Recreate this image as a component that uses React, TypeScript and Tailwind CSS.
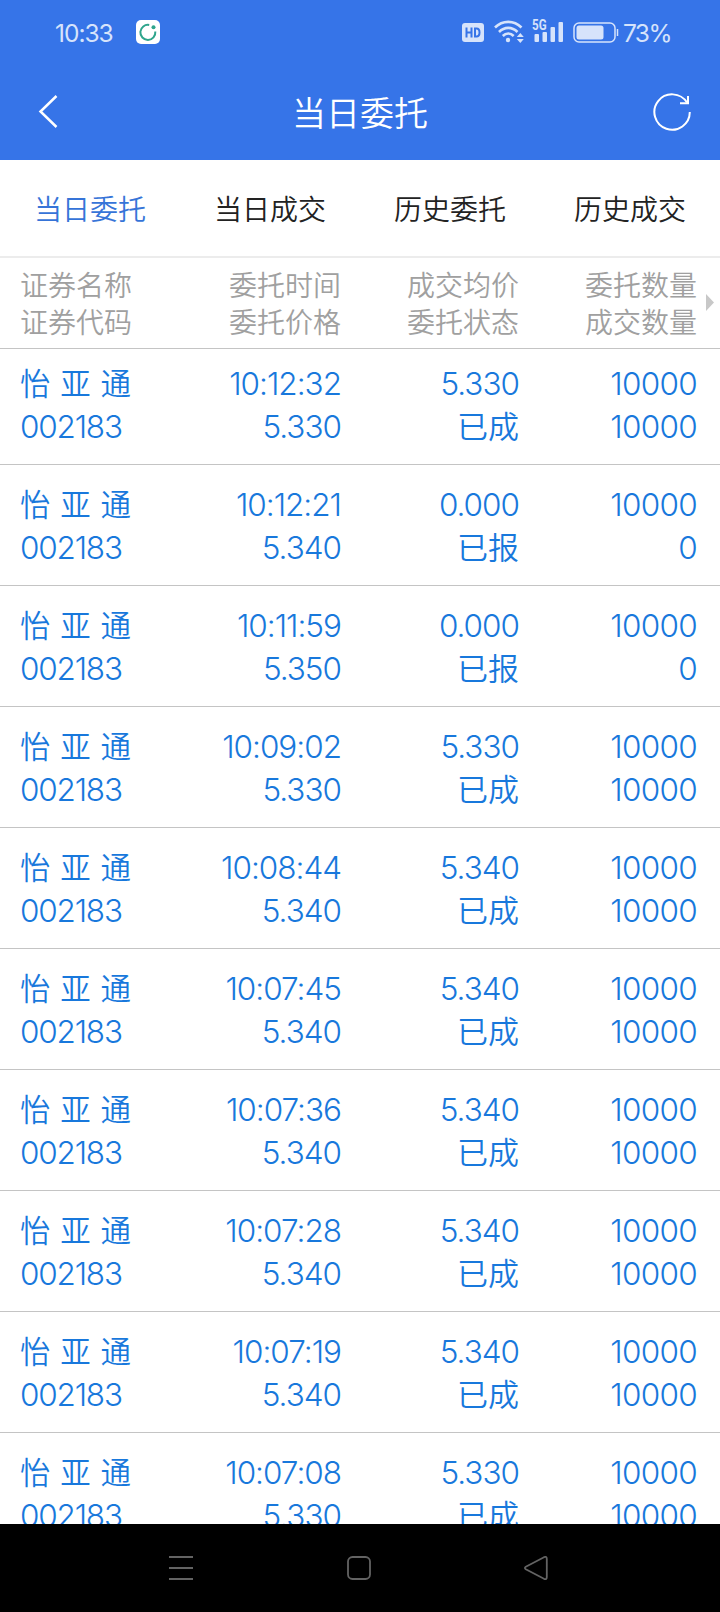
import { clsx } from "clsx";

const tabs = ["当日委托", "当日成交", "历史委托", "历史成交"];

const columns = [
  ["证券名称", "证券代码"],
  ["委托时间", "委托价格"],
  ["成交均价", "委托状态"],
  ["委托数量", "成交数量"],
];

const orders = [
  { time: "10:12:32", price: "5.330", average: "5.330", status: "已成", filled: "10000" },
  { time: "10:12:21", price: "5.340", average: "0.000", status: "已报", filled: "0" },
  { time: "10:11:59", price: "5.350", average: "0.000", status: "已报", filled: "0" },
  { time: "10:09:02", price: "5.330", average: "5.330", status: "已成", filled: "10000" },
  { time: "10:08:44", price: "5.340", average: "5.340", status: "已成", filled: "10000" },
  { time: "10:07:45", price: "5.340", average: "5.340", status: "已成", filled: "10000" },
  { time: "10:07:36", price: "5.340", average: "5.340", status: "已成", filled: "10000" },
  { time: "10:07:28", price: "5.340", average: "5.340", status: "已成", filled: "10000" },
  { time: "10:07:19", price: "5.340", average: "5.340", status: "已成", filled: "10000" },
  { time: "10:07:08", price: "5.330", average: "5.330", status: "已成", filled: "10000" },
];

function StatusBar() {
  return (
    <div className="flex h-16 items-center pl-[55px] pr-[51px] font-['Inter','Noto_Sans_CJK_SC',sans-serif] text-[24.5px] font-normal leading-none text-[#d6e3fb]">
      <span className="w-[81px] pt-0.5 tracking-[-1px]">10:33</span>
      <svg className="h-6 w-6" viewBox="0 0 24 24" fill="none">
        <rect width="24" height="24" rx="5" fill="#fff" />
        <path d="M13.2 5A7.5 7.5 0 1 0 19.3 11.5" stroke="#2fa58c" strokeWidth="2" />
        <circle cx="17.5" cy="7.2" r="2" fill="#2fa58c" />
      </svg>
      <div className="ml-auto flex items-center">
        <svg className="h-6 w-[22px]" viewBox="0 0 22 24" fill="none">
          <rect y="3" width="22" height="19" rx="3" fill="#d6e3fb" />
          <path d="M4.5 7.5v10M9.5 7.5v10M4.5 12.5h5M13 8.5v8h1.5q3 0 3-4t-3-4z" stroke="#3674e8" strokeWidth="2" />
        </svg>
        <svg className="ml-2.5 h-6 w-[30px]" viewBox="0 0 30 24" fill="none" stroke="#d6e3fb" strokeWidth="2.6">
          <path d="M1 7.5C8.500 0 20 0 27.500 7.500M5 12C10.500 6.500 18 6.500 23.500 12M8.800 16C12 12.800 16.500 12.800 19.700 16" />
          <circle cx="14" cy="20" r="2.200" fill="#d6e3fb" stroke="none" />
          <path d="M26.300 13l3.500 4h-7zM26.300 23l3.500-4h-7z" fill="#d6e3fb" stroke="none" />
        </svg>
        <div className="relative ml-2 h-6 w-8">
          <span className="absolute left-0 -top-px origin-left scale-x-80 font-[Roboto,sans-serif] text-[14.5px] font-bold leading-none">
            5G
          </span>
          <svg className="h-6 w-8" viewBox="0 0 32 24" fill="#d6e3fb">
            <rect x="2.500" y="14" width="4.500" height="8" rx="1" />
            <rect x="10.500" y="12" width="4.500" height="10" rx="1" />
            <rect x="18.500" y="7" width="4.500" height="15" rx="1" />
            <rect x="26.500" y="2" width="4.500" height="20" rx="1" />
          </svg>
        </div>
        <svg className="ml-[9px] h-6 w-[46px]" viewBox="0 0 46 24" fill="none">
          <rect x="1" y="3" width="41" height="19" rx="5" stroke="#d6e3fb" strokeWidth="1.500" />
          <rect x="3.500" y="5.500" width="27" height="14" rx="2.500" fill="#d6e3fb" />
          <path d="M44.500 9v7" stroke="#d6e3fb" strokeWidth="1.500" />
        </svg>
        <span className="ml-1 w-[46px] whitespace-nowrap pt-0.5 tracking-[-1.6px]">73%</span>
      </div>
    </div>
  );
}

function TitleBar() {
  return (
    <div className="flex h-24 items-center justify-between pl-[38px] pr-[29px]">
      <svg className="h-9 w-5" viewBox="0 0 20 36" fill="none" stroke="#fff" strokeWidth="2.500">
        <path d="M18.500 2L2.500 17.500L18.500 33" />
      </svg>
      <h1 className="pl-[9px] text-[34px] leading-none text-white">当日委托</h1>
      <svg className="h-[38px] w-[38px]" viewBox="0 0 38 38" fill="none" stroke="#fff" strokeWidth="2">
        <path d="M36.800 19A17.700 17.700 0 1 1 34 9.500" />
        <path d="M35 3v7.300H27" />
      </svg>
    </div>
  );
}

function NavBar() {
  return (
    <nav className="flex h-[88px] items-center bg-black pl-[169px]">
      <svg className="h-6 w-6" viewBox="0 0 24 24" stroke="#636363" strokeWidth="2">
        <path d="M0 1h24M0 12h24M0 23h24" />
      </svg>
      <svg className="ml-[154px] h-6 w-6" viewBox="0 0 24 24" fill="none" stroke="#636363" strokeWidth="1.800">
        <rect x="1" y="1" width="22" height="22" rx="4.500" />
      </svg>
      <svg className="ml-[153px] h-6 w-6" viewBox="0 0 24 24" fill="none" stroke="#636363" strokeWidth="1.800">
        <path d="M1.800 10.700L20 1.200Q22.800 0 22.800 3V21Q22.800 24 20 22.800L1.800 13.300Q0 12 1.800 10.700Z" />
      </svg>
    </nav>
  );
}

export default function App() {
  return (
    <div className="flex h-[1612px] w-[720px] flex-col overflow-hidden bg-white font-['Noto_Sans_CJK_SC',sans-serif] font-[350]">
      <header className="h-40 shrink-0 bg-[#3674e8]">
        <StatusBar />
        <TitleBar />
      </header>

      {/* Tabs */}
      <div className="grid h-[98px] shrink-0 grid-cols-4 items-center border-b-2 border-[#ececec] text-center text-[28px] leading-none">
        {tabs.map((tab, index) => (
          <button key={tab} className={clsx("pb-px", index === 0 ? "text-[#3674d8]" : "text-[#222]")}>
            {tab}
          </button>
        ))}
      </div>

      {/* Column headings */}
      <div className="relative grid h-[91px] shrink-0 grid-cols-[121px_200px_178px_178px] border-b border-[#c4c4c4] pl-5 pt-2 text-[28px] leading-[37px] text-[#a0a0a0]">
        {columns.map(([top, bottom], index) => (
          <div key={top} className={clsx("whitespace-nowrap", index > 0 && "text-right")}>
            <div>{top}</div>
            <div>{bottom}</div>
          </div>
        ))}
        <svg className="absolute right-1.5 top-9 h-[17px] w-2" viewBox="0 0 8 17" fill="#c8c8c8">
          <path d="M0 0L8 8.500L0 17Z" />
        </svg>
      </div>

      {/* Orders */}
      <main className="min-h-0 flex-1 overflow-hidden">
        <div className="-mt-[5px] font-['Inter','Noto_Sans_CJK_SC',sans-serif] text-[31.500px] font-light leading-[43px] text-[#1878dc]">
          {orders.map((order) => (
            <div
              key={order.time}
              className="grid h-[121px] grid-cols-[121px_200px_178px_178px] whitespace-nowrap border-b border-[#c4c4c4] pl-5 pt-[18px] text-right tracking-[-1px]"
            >
              <div className="text-left">
                <div className="h-[43px] font-['Noto_Sans_CJK_SC',sans-serif] text-[30.5px] font-[350] leading-10 tracking-normal [word-spacing:3px]">
                  怡 亚 通
                </div>
                <div className="tracking-[-1.2px]">002183</div>
              </div>
              <div>
                <div>{order.time}</div>
                <div>{order.price}</div>
              </div>
              <div>
                <div>{order.average}</div>
                <div className="font-['Noto_Sans_CJK_SC',sans-serif] text-[31px] font-[350] leading-10 tracking-normal">
                  {order.status}
                </div>
              </div>
              <div className="tracking-[-0.7px]">
                <div>10000</div>
                <div>{order.filled}</div>
              </div>
            </div>
          ))}
        </div>
      </main>

      <NavBar />
    </div>
  );
}
